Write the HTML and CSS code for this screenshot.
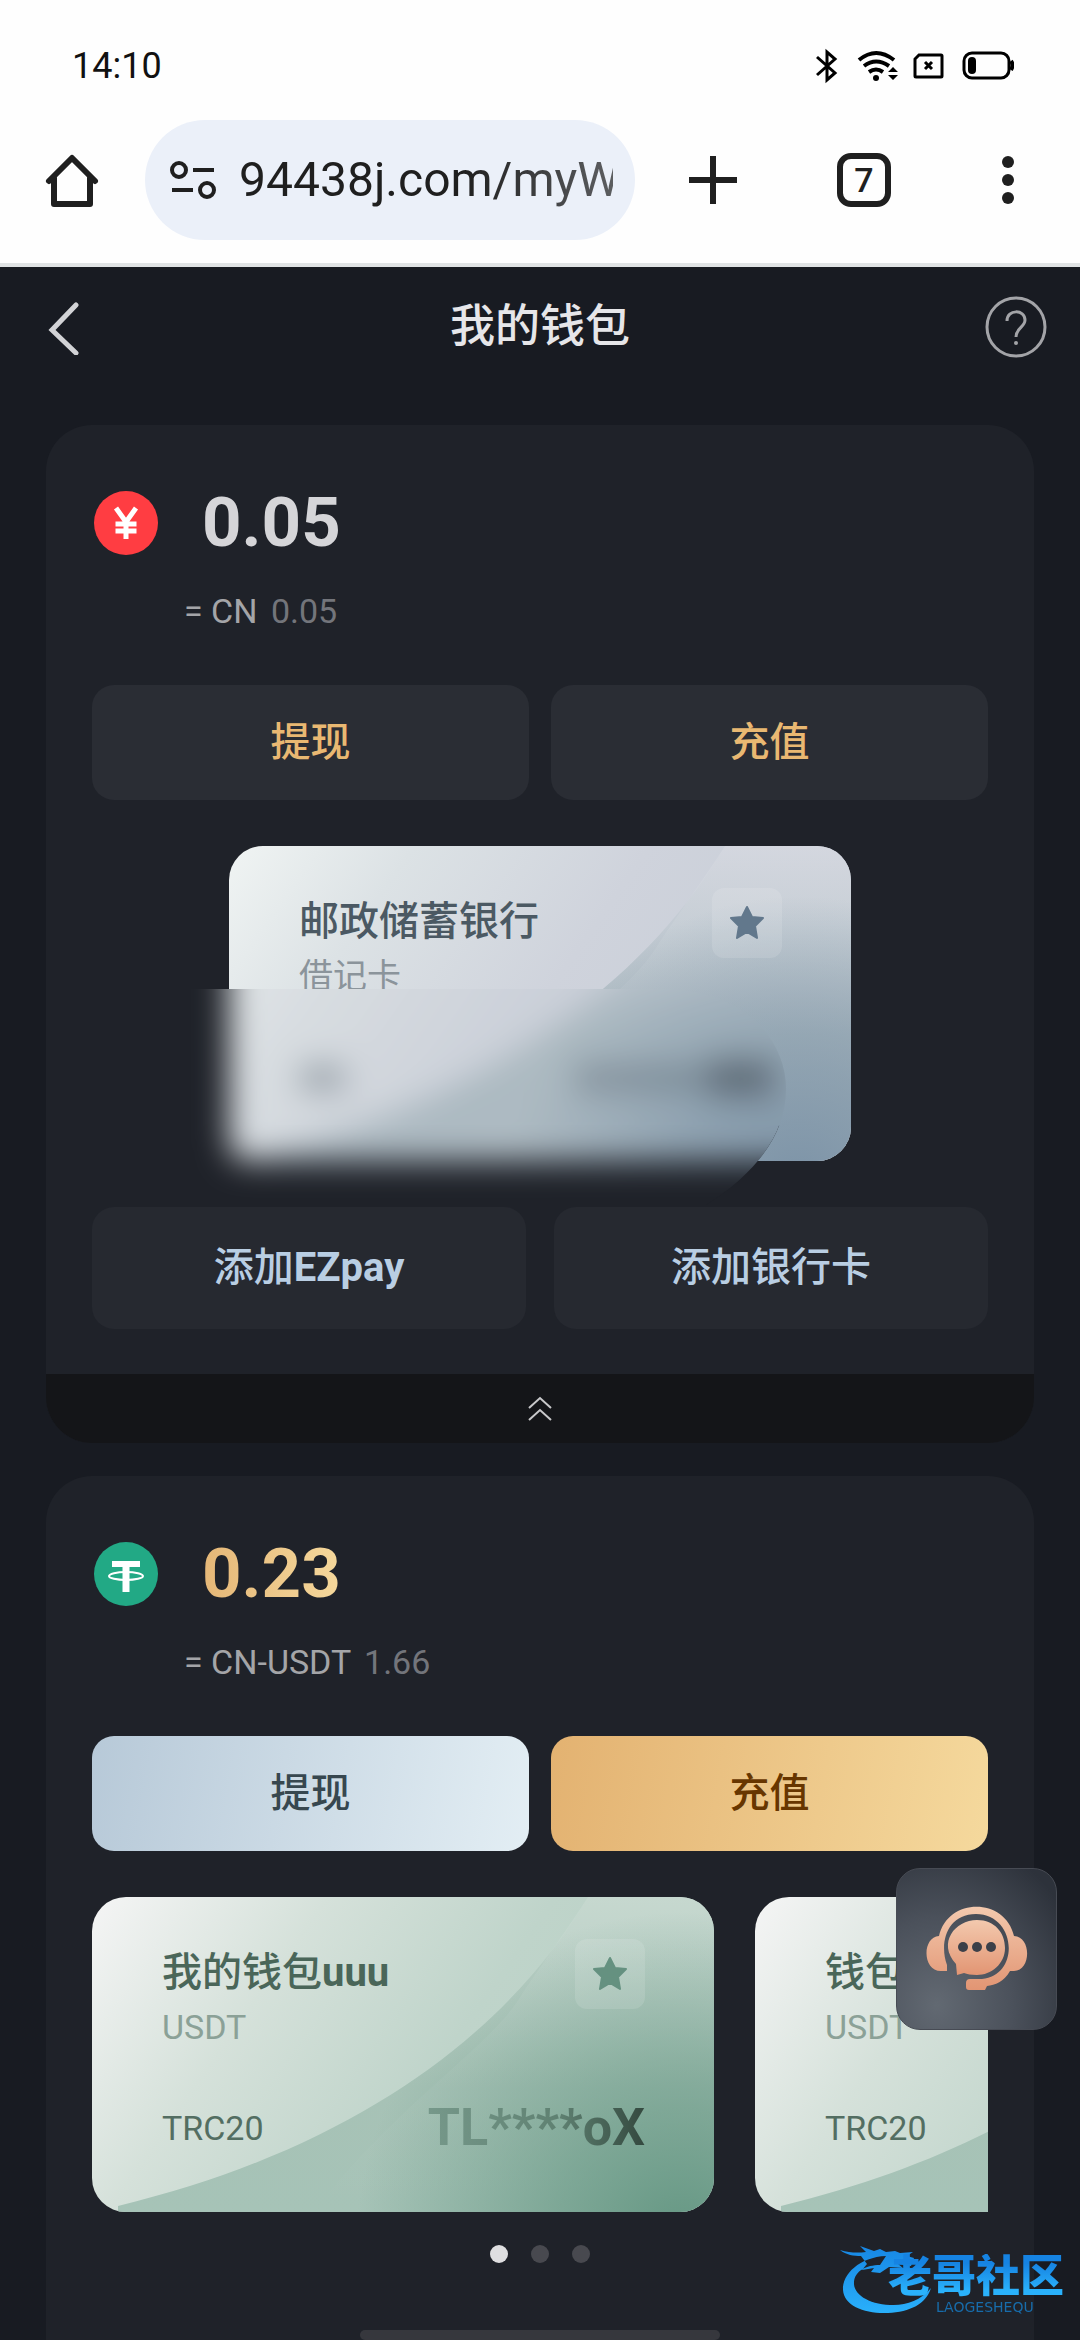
FILE: index.html
```html
<!DOCTYPE html>
<html lang="zh-CN">
<head>
<meta charset="utf-8">
<meta name="viewport" content="width=device-width, initial-scale=1">
<title>我的钱包</title>
<link rel="stylesheet" href="styles.css">
</head>
<body>
<div class="browser">
  <div class="status">
    <span>14:10</span>
    <svg class="status-icons" width="200" height="36" viewBox="0 0 200 36" fill="none" stroke="#000" stroke-width="3">
      <path d="M3 9 21 25 13 32V4l8 7L3 27" stroke-width="3"/>
      <path d="M45 12Q62-2 80 12M50 18q12-9 25 0M55 24q7-5 14 0" stroke-width="4"/>
      <circle cx="62" cy="30" r="3" fill="#000" stroke="none"/>
      <path d="M74 24l5-5 5 5zM74 27l5 5 5-5z" fill="#000" stroke="none"/>
      <path d="M105 7h22q1 0 1 1v20q0 1-1 1h-25q-1 0-1-1V11z"/>
      <path d="M111 14l7 7M118 14l-7 7" stroke-width="3"/>
      <rect x="150" y="5" width="45" height="25" rx="8"/>
      <rect x="154" y="9" width="8" height="17" rx="4" fill="#000" stroke="none"/>
      <path d="M197 13q3 4 0 9" stroke-width="4"/>
    </svg>
  </div>
  <div class="toolbar">
    <button class="plain" aria-label="主页"><svg width="56" height="60" viewBox="0 0 56 60" fill="none" stroke="#1f1f1f" stroke-width="6" stroke-linecap="round" stroke-linejoin="round"><path d="M5 31 28 8l23 23M10 28v26h36V28"/></svg></button>
    <label class="url">
      <svg width="48" height="40" viewBox="0 0 48 40" fill="none" stroke="#1f1f1f" stroke-width="4"><circle cx="10" cy="10" r="7"/><path d="M24 10h21M3 30h21"/><circle cx="38" cy="30" r="7"/></svg>
      <input type="text" value="94438j.com/myWallet" aria-label="网址">
    </label>
    <button class="plain" aria-label="新标签页"><svg width="48" height="48" viewBox="0 0 48 48" stroke="#1f1f1f" stroke-width="6"><path d="M24 0v48M0 24h48"/></svg></button>
    <button class="tabs">7</button>
    <button class="plain" aria-label="更多"><svg width="14" height="50" viewBox="0 0 14 50" fill="#1f1f1f"><circle cx="7" cy="7" r="6"/><circle cx="7" cy="25" r="6"/><circle cx="7" cy="43" r="6"/></svg></button>
  </div>
</div>

<header class="header">
  <button class="plain" aria-label="返回"><svg width="34" height="56" viewBox="0 0 34 56" fill="none" stroke="#d2d3d6" stroke-width="5" stroke-linecap="round"><path d="M30 6 6 31l24 23"/></svg></button>
  <h1>我的钱包</h1>
  <button class="plain" aria-label="帮助"><svg width="64" height="64" viewBox="0 0 64 64" fill="none" stroke="#a3a4a8" stroke-width="3"><circle cx="32" cy="32" r="29"/><path d="M23 26c0-12 18-12 18-1 0 7-9 8-9 17" stroke-width="3"/><circle cx="32" cy="48" r="2" fill="#a3a4a8" stroke="none"/></svg></button>
</header>

<main class="main">
  <section class="wallet">
    <div class="balance">
      <svg width="64" height="64" viewBox="0 0 64 64"><circle cx="32" cy="32" r="32" fill="#ff3d42"/><path d="M22 17l10 14 10-14M32 31v17M21.500 33h21M21.500 40h21" fill="none" stroke="#fff" stroke-width="5"/></svg>
      <strong>0.05</strong>
    </div>
    <p class="rate">= CN <span>0.05</span></p>
    <div class="actions">
      <button class="btn dark">提现</button>
      <button class="btn dark">充值</button>
    </div>
    <div class="bank-row">
      <article class="pass bank">
        <svg class="wave" viewBox="0 0 622 315" preserveAspectRatio="none">
          <defs>
            <linearGradient id="bank-base" x1="0" y1="0" x2="0" y2="1"><stop offset="0" stop-color="#cfd3dc"/><stop offset=".25" stop-color="#c3cbd3"/><stop offset=".6" stop-color="#abb9c0"/><stop offset="1" stop-color="#adbac2"/></linearGradient>
            <radialGradient id="bank-shade" gradientUnits="userSpaceOnUse" cx="570" cy="340" r="290"><stop offset="0" stop-color="#7c93a7"/><stop offset=".4" stop-color="#8096a8" stop-opacity=".7"/><stop offset="1" stop-color="#8196a8" stop-opacity="0"/></radialGradient>
            <linearGradient id="lift" x1="0" y1="0" x2="0" y2="1"><stop offset="0" stop-color="#fff" stop-opacity=".1"/><stop offset="1" stop-color="#fff" stop-opacity="0"/></linearGradient>
          </defs>
          <g id="bank-wave">
            <path d="M496 0C420 130 270 250 26 309V315H622V0z" fill="url(#bank-base)"/>
            <path d="M496 0C470 40 455 60 430 97 400 150 300 210 222 315H622V0z" fill="url(#lift)"/>
            <path d="M496 0C420 130 270 250 26 309V315H622V0z" fill="url(#bank-shade)"/>
          </g>
        </svg>
        <div class="pass-top">
          <div><h2>邮政储蓄银行</h2><p>借记卡</p></div>
          <button class="star" aria-label="默认"><svg width="36" height="36" viewBox="0 0 36 36" fill="#62788c" stroke="#62788c" stroke-width="2" stroke-linejoin="round"><path d="M18 2l5 10 11 1-8 8 2 12-10-6-10 6 2-12-8-8 11-1z"/></svg></button>
        </div>
      </article>
      <svg class="smudge" viewBox="0 0 622 250">
        <defs>
          <linearGradient id="bank-paper" gradientUnits="userSpaceOnUse" x1="28" y1="-40" x2="594" y2="355"><stop offset="0" stop-color="#e8ecec"/><stop offset=".22" stop-color="#d8dde1"/><stop offset=".5" stop-color="#cbd0d9"/><stop offset="1" stop-color="#c0c7d1"/></linearGradient>
          <filter id="soft" filterUnits="userSpaceOnUse" x="-60" y="-60" width="760" height="460"><feGaussianBlur stdDeviation="16"/></filter>
          <clipPath id="smudge-shape"><path d="M0 24H480C560 26 600 76 600 124 600 165 575 205 520 240H0z"/></clipPath>
        </defs>
        <g clip-path="url(#smudge-shape)">
          <path d="M0 24H90V160H600V240H0z" fill="#1f2229"/>
          <g transform="translate(43 -119)" filter="url(#soft)">
            <rect width="622" height="315" rx="20" fill="url(#bank-paper)"/>
            <use href="#bank-wave"/>
            <g fill="#5f6d78"><rect x="70" y="218" width="46" height="28" opacity=".5"/><rect x="345" y="218" width="150" height="28" opacity=".45"/><rect x="480" y="212" width="66" height="40" opacity=".8" fill="#55606c"/></g>
          </g>
        </g>
      </svg>
    </div>
    <div class="actions wide">
      <button class="btn add">添加<b>EZpay</b></button>
      <button class="btn add">添加银行卡</button>
    </div>
    <button class="fold" aria-label="收起"><svg width="24" height="26" viewBox="0 0 24 26" fill="none" stroke="#c8c8ca" stroke-width="2"><path d="M1 12 12 2l11 10M1 24l11-10 11 10"/></svg></button>
  </section>

  <section class="wallet">
    <div class="balance">
      <svg width="64" height="64" viewBox="0 0 64 64"><circle cx="32" cy="32" r="32" fill="#22a985"/><path d="M18 19h28V25H35.500v25h-7V25H18z" fill="#fff"/><ellipse cx="32" cy="34" rx="17" ry="4" fill="none" stroke="#fff" stroke-width="2"/></svg>
      <strong class="gold">0.23</strong>
    </div>
    <p class="rate">= CN-USDT <span>1.66</span></p>
    <div class="actions">
      <button class="btn silver">提现</button>
      <button class="btn amber">充值</button>
    </div>
    <div class="slides">
      <article class="pass usdt">
        <svg class="wave" viewBox="0 0 622 315" preserveAspectRatio="none">
          <defs>
            <linearGradient id="usdt-base" x1="0" y1="0" x2="0" y2="1"><stop offset="0" stop-color="#c0d4ca"/><stop offset=".25" stop-color="#b7cdc3"/><stop offset=".6" stop-color="#a7c2b6"/><stop offset="1" stop-color="#a6c3b7"/></linearGradient>
            <radialGradient id="usdt-shade" gradientUnits="userSpaceOnUse" cx="590" cy="340" r="325"><stop offset="0" stop-color="#659783"/><stop offset=".4" stop-color="#6d9c89" stop-opacity=".7"/><stop offset="1" stop-color="#6d9c89" stop-opacity="0"/></radialGradient>
          </defs>
          <path d="M496 0C420 130 270 250 26 309V315H622V0z" fill="url(#usdt-base)"/>
          <path d="M496 0C470 40 455 60 430 97 400 150 300 210 222 315H622V0z" fill="url(#lift)"/>
          <path d="M496 0C420 130 270 250 26 309V315H622V0z" fill="url(#usdt-shade)"/>
        </svg>
        <div class="pass-top">
          <div><h2>我的钱包<b>uuu</b></h2><p>USDT</p></div>
          <button class="star" aria-label="默认"><svg width="36" height="36" viewBox="0 0 36 36" fill="#659180" stroke="#659180" stroke-width="2" stroke-linejoin="round"><path d="M18 2l5 10 11 1-8 8 2 12-10-6-10 6 2-12-8-8 11-1z"/></svg></button>
        </div>
        <div class="pass-bottom"><span>TRC20</span><b>TL****oX</b></div>
      </article>
      <article class="pass usdt">
        <svg class="wave" viewBox="0 0 622 315" preserveAspectRatio="none">
          <path d="M496 0C420 130 270 250 26 309V315H622V0z" fill="url(#usdt-base)"/>
        </svg>
        <div class="pass-top"><div><h2>钱包</h2><p>USDT</p></div></div>
        <div class="pass-bottom"><span>TRC20</span></div>
      </article>
    </div>
    <div class="dots"><i class="on"></i><i></i><i></i></div>
  </section>
</main>

<button class="service" aria-label="客服">
  <svg width="104" height="88" viewBox="0 0 104 88">
    <defs><linearGradient id="headset" x1="0" y1="0" x2="0" y2="1"><stop offset="0" stop-color="#f3c9ae"/><stop offset="1" stop-color="#e29573"/></linearGradient></defs>
    <path d="M22 66H16C-3 66-3 32 14 31 23-8 80-8 89 31c18 1 17 35 0 35h-4C79 77 70 80 62 81l-2 4H44q-3 0-3-3v-4q0-4 4-4h12C96 70 91 9 51 9 22 9 14 38 22 60z" fill="url(#headset)"/>
    <path d="M32 70l-1-11C12 38 30 15 52 15c18 0 28 13 28 28 0 16-14 27-28 27-6 0-10-1-13-2z" fill="url(#headset)"/>
    <g fill="#3c4049"><circle cx="38" cy="42" r="5"/><circle cx="52" cy="42" r="5"/><circle cx="66" cy="42" r="5"/></g>
  </svg>
</button>

<div class="mark">
  <svg width="92" height="74" viewBox="0 0 92 74">
    <defs><linearGradient id="dragon" x1="0" y1="0" x2="0" y2="1"><stop offset="0" stop-color="#1787e4"/><stop offset="1" stop-color="#29b0fb"/></linearGradient></defs>
    <path d="M46 12C20 13 2 30 3 46 4 62 25 70 48 69 70 68 86 60 91 44 80 57 65 62 50 61 28 60 13 50 14 38 15 27 26 21 40 21zM0 6c10 3 18 3 26 2l-6-6 14 5 6-2 6 3 9-1 5 2 13-1-6 4 7 2-3 8-13-2 5 4-14-1-9 6-9-1 3-4-12 2 5-6-6-8C14 12 6 11 0 6z" fill="url(#dragon)"/>
  </svg>
  <div class="mark-text"><b>老哥社区</b><small>LAOGESHEQU</small></div>
</div>
<div class="home-bar"></div>
</body>
</html>
```
FILE: styles.css
```css
* { box-sizing: border-box; }

body {
  margin: 0;
  min-height: 100vh;
  background: #181b22;
  color: #e6e6e9;
  font-family: Roboto, "Noto Sans CJK SC", sans-serif;
  font-size: 34px;
  line-height: 40px;
}

h1, h2, p { margin: 0; }

button {
  padding: 0;
  border: 0;
  font: inherit;
}

svg { display: block; }

.plain { background: none; }

/* Browser chrome */
.browser {
  background: #fefefe;
  border-bottom: 4px solid #e0e3e4;
}

.status {
  display: flex;
  justify-content: space-between;
  align-items: center;
  padding: 46px 66px 34px 72px;
  color: #111;
  font-size: 36px;
}

.toolbar {
  display: flex;
  align-items: center;
  padding: 0 65px 23px 44px;
}

.url {
  display: flex;
  flex: 1;
  align-items: center;
  gap: 22px;
  min-width: 0;
  height: 120px;
  margin: 0 54px 0 45px;
  padding: 0 22px 0 24px;
  border-radius: 60px;
  background: #ebf0f9;
}

.url input {
  flex: 1;
  min-width: 0;
  padding: 0;
  border: 0;
  background: none;
  color: #1f1f1f;
  font: 48px/60px Roboto, sans-serif;
  mask-image: linear-gradient(to right, #000 60%, rgba(0, 0, 0, .7));
}

.tabs {
  width: 54px;
  height: 54px;
  margin: 0 110px 0 100px;
  border: 6px solid #1f1f1f;
  border-radius: 14px;
  background: none;
  color: #1f1f1f;
  font-size: 34px;
  font-weight: 500;
}

/* Page header */
.header {
  display: flex;
  align-items: center;
  justify-content: space-between;
  height: 120px;
  padding: 0 32px 0 46px;
}

.header h1 {
  padding-left: 16px;
  font-size: 45px;
  font-weight: 500;
  line-height: 60px;
}

/* Wallet sections */
.main {
  display: grid;
  gap: 33px;
  padding: 38px 46px 0;
}

.wallet {
  padding: 66px 46px 0;
  border-radius: 46px;
  background: #1f2229;
  overflow: hidden;
}

.wallet:last-child { padding-bottom: 160px; }

.balance {
  display: flex;
  align-items: center;
  gap: 44px;
  padding-left: 2px;
}

.balance strong {
  color: #d5d5d8;
  font-size: 69px;
  font-weight: 700;
  line-height: 64px;
}

.balance .gold {
  background: linear-gradient(to right, #e5b777, #f5d89c);
  background-clip: text;
  color: transparent;
}

.rate {
  padding: 36px 0 54px 92px;
  color: #a4a5a8;
}

.rate span {
  margin-left: 5px;
  color: #73757b;
}

.actions {
  display: grid;
  grid-template-columns: 1fr 1fr;
  gap: 22px;
}

.actions.wide { gap: 28px; }

.btn {
  height: 115px;
  border-radius: 22px;
  font-size: 40px;
  font-weight: 500;
}

.dark { background: #2a2d34; color: #e9b872; }
.silver { background: linear-gradient(100deg, #b7c9d8, #e3eef4); color: #37474f; }
.amber { background: linear-gradient(100deg, #e3b271, #f5d99d); color: #673600; }

.add {
  height: 122px;
  background: #262930;
  color: #b9cee3;
}

.fold {
  display: flex;
  justify-content: center;
  align-items: center;
  width: calc(100% + 92px);
  height: 69px;
  margin: 45px -46px 0;
  background: #141518;
}

/* Payment cards */
.bank-row {
  position: relative;
  display: flex;
  justify-content: center;
  padding: 46px 0;
}

.pass {
  position: relative;
  display: flex;
  flex: none;
  flex-direction: column;
  justify-content: space-between;
  width: 622px;
  height: 315px;
  padding: 42px 69px 56px 70px;
  border-radius: 34px;
  overflow: hidden;
}

.bank { background: linear-gradient(125deg, #f0f4f3, #dce2e5 22%, #cfd3dc 50%, #c3cad4); }
.usdt { background: linear-gradient(125deg, #f5f5f5, #d5e1da 28%, #bfd4ca 55%, #b5cec2); }

.wave {
  position: absolute;
  inset: 0;
  width: 100%;
  height: 100%;
}

.pass-top,
.pass-bottom {
  position: relative;
  display: flex;
  justify-content: space-between;
}

.pass-top h2 {
  padding-top: 8px;
  font-size: 40px;
  font-weight: 500;
  line-height: 52px;
}

.pass-top p {
  padding-top: 8px;
  line-height: 40px;
}

.bank h2 { color: #4b5963; }
.bank p { color: #8b949b; }
.usdt h2 { color: #4a6659; }
.usdt p { color: #8ba197; }
.usdt span { color: #536e62; }

.star {
  display: grid;
  place-items: center;
  width: 70px;
  height: 70px;
  border-radius: 12px;
  background: rgba(255, 255, 255, .12);
}

.pass-bottom {
  align-items: center;
  min-height: 56px;
}

.pass-bottom b {
  background: linear-gradient(to right, #76988a, #5f8172 60%, #34493f);
  background-clip: text;
  color: transparent;
  font-size: 52px;
  line-height: 56px;
}

.smudge {
  position: absolute;
  top: 165px;
  left: calc(50% - 354px);
  width: 622px;
  height: 250px;
}

.slides {
  display: flex;
  gap: 41px;
  margin-top: 46px;
  overflow: hidden;
}

.dots {
  display: flex;
  justify-content: center;
  gap: 23px;
  padding-top: 33px;
}

.dots i {
  width: 18px;
  height: 18px;
  border-radius: 50%;
  background: #48494f;
}

.dots .on { background: #dfdfe1; }

/* Floating layers */
.service {
  position: fixed;
  right: 23px;
  bottom: 310px;
  display: grid;
  place-items: center;
  width: 161px;
  height: 162px;
  border: 1px solid #474b54;
  border-radius: 24px;
  background: radial-gradient(ellipse at 25% 85%, #626972, #4b515b 45%, #2d323b 90%);
}

.mark {
  position: fixed;
  right: 16px;
  bottom: 22px;
  display: flex;
}

.mark-text {
  display: flex;
  flex-direction: column;
  margin-left: -44px;
  padding-top: 10px;
}

.mark b {
  background: linear-gradient(#1683e2 20%, #2ab2fc 80%);
  background-clip: text;
  color: transparent;
  font-size: 44px;
  font-weight: 900;
  line-height: 46px;
}

.mark small {
  padding-left: 48px;
  color: #176cab;
  font: 14px/14px "DejaVu Sans", sans-serif;
}

.home-bar {
  position: fixed;
  bottom: 0;
  left: 50%;
  width: 360px;
  height: 10px;
  margin-left: -180px;
  border-radius: 5px;
  background: #36373d;
}
```
